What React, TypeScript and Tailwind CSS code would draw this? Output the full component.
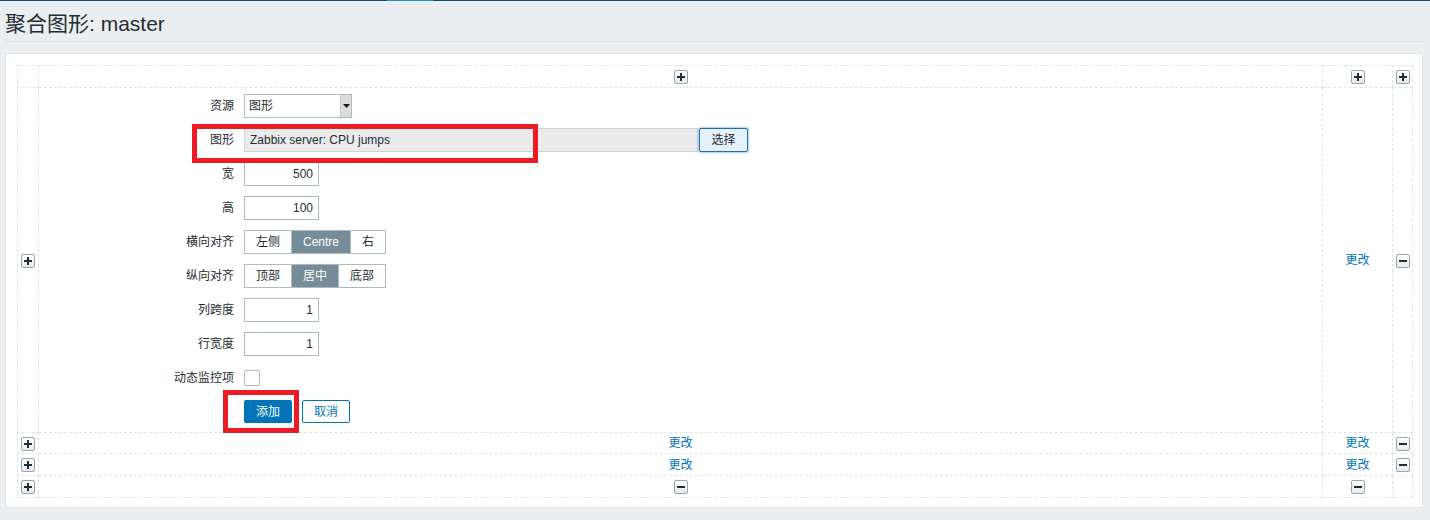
import React from 'react';

const BLUE = 'text-[#0275b8]';

const SmallBtn: React.FC<{ kind: 'plus' | 'minus' }> = ({ kind }) => (
    <span className="inline-flex w-[14px] h-[14px] items-center justify-center rounded-[2px] border border-[#98a6ae] bg-gradient-to-b from-white to-[#e6eaec] align-middle">
        <svg width="8" height="8" viewBox="0 0 8 8">
            <rect x="0" y="3" width="8" height="2" fill="#1f2c33" />
            {kind === 'plus' && <rect x="3" y="0" width="2" height="8" fill="#1f2c33" />}
        </svg>
    </span>
);

const Field: React.FC<{ label: string; children: React.ReactNode }> = ({ label, children }) => (
    <div className="flex items-center h-[24px]">
        <div className="w-[205px] pr-[10px] text-right shrink-0">{label}</div>
        {children}
    </div>
);

const NumInput: React.FC<{ value: string }> = ({ value }) => (
    <div className="w-[75px] h-[24px] border border-[#acbbc2] bg-white text-right pr-[5px] leading-[22px]">{value}</div>
);

const Segmented: React.FC<{ items: string[]; active: number }> = ({ items, active }) => (
    <div className="flex h-[24px] border border-[#acbbc2]">
        {items.map((it, i) => (
            <div
                key={it}
                className={`px-[11px] leading-[22px] ${i > 0 ? 'border-l border-[#acbbc2]' : ''} ${i === active ? 'bg-[#768d99] text-white' : 'bg-white'}`}
            >
                {it}
            </div>
        ))}
    </div>
);

const cell = 'border border-dashed border-[#dfe4e8] p-0';

export default function App() {
    return (
        <div className="relative w-[1430px] h-[520px] overflow-hidden bg-[#ebeef0] text-[12px] text-[#1f2c33] font-['Liberation_Sans','Noto_Sans_CJK_SC',sans-serif]">
            {/* top strip */}
            <div className="flex h-px bg-[#0b4a6e]">
                <div className="ml-[387px] w-[47px] bg-[#1f8fd0]" />
            </div>

            {/* header */}
            <div className="mx-[5px] h-[41px] border-b border-[#dde2e6] flex items-center">
                <h1 className="text-[21px] leading-none mt-[4px]">聚合图形: master</h1>
            </div>

            {/* panel */}
            <div className="ml-[5px] mt-[11px] w-[1418px] bg-white border border-[#dfe4e7] pl-[11px] pt-[11px] pb-[9px]">
                <table className="border-collapse table-fixed w-[1395px]">
                    <colgroup>
                        <col className="w-[21px]" />
                        <col className="w-[1284px]" />
                        <col className="w-[70px]" />
                        <col className="w-[20px]" />
                    </colgroup>
                    <tbody>
                        <tr className="h-[22px]">
                            <td className={cell}></td>
                            <td className={`${cell} text-center`}><SmallBtn kind="plus" /></td>
                            <td className={`${cell} text-center`}><SmallBtn kind="plus" /></td>
                            <td className={`${cell} text-center`}><SmallBtn kind="plus" /></td>
                        </tr>
                        <tr className="h-[345px]">
                            <td className={`${cell} text-center`}><SmallBtn kind="plus" /></td>
                            <td className={`${cell} align-top`}>
                                <div className="flex flex-col gap-[10px] pt-[6px] pb-[8px]">
                                    <Field label="资源">
                                        <div className="flex w-[108px] h-[24px] border border-[#acbbc2] bg-white">
                                            <div className="flex-1 pl-[4px] leading-[22px]">图形</div>
                                            <div className="w-[11px] bg-[#dcdcdc] border-l border-[#c6c6c6] flex items-center justify-center">
                                                <svg width="7" height="4" viewBox="0 0 7 4"><path d="M0 0h7L3.5 4z" fill="#111" /></svg>
                                            </div>
                                        </div>
                                    </Field>
                                    <Field label="图形">
                                        <div className="w-[454px] h-[24px] border border-[#cdd3d6] bg-[#ebebeb] pl-[5px] leading-[22px]">Zabbix server: CPU jumps</div>
                                        <button className="ml-px w-[49px] h-[24px] rounded-[2px] border border-[#1e6fb0] bg-[#e6f2fb] shadow-[0_0_2px_1px_rgba(2,117,184,0.35)] text-[#1f2c33]">选择</button>
                                    </Field>
                                    <Field label="宽"><NumInput value="500" /></Field>
                                    <Field label="高"><NumInput value="100" /></Field>
                                    <Field label="横向对齐"><Segmented items={['左侧', 'Centre', '右']} active={1} /></Field>
                                    <Field label="纵向对齐"><Segmented items={['顶部', '居中', '底部']} active={1} /></Field>
                                    <Field label="列跨度"><NumInput value="1" /></Field>
                                    <Field label="行宽度"><NumInput value="1" /></Field>
                                    <Field label="动态监控项">
                                        <div className="w-[16px] h-[16px] rounded-[2px] border border-[#acbbc2] bg-white" />
                                    </Field>
                                    <div className="flex h-[24px] pl-[205px] gap-[10px]">
                                        <button className="w-[48px] h-[23px] rounded-[2px] bg-[#0275b8] text-white">添加</button>
                                        <button className={`w-[48px] h-[23px] rounded-[2px] border border-[#0275b8] bg-white ${BLUE}`}>取消</button>
                                    </div>
                                </div>
                            </td>
                            <td className={`${cell} text-center ${BLUE}`}>更改</td>
                            <td className={`${cell} text-center`}><SmallBtn kind="minus" /></td>
                        </tr>
                        {[0, 1].map(i => (
                            <tr key={i} className={i === 0 ? 'h-[21px]' : 'h-[22px]'}>
                                <td className={`${cell} text-center`}><SmallBtn kind="plus" /></td>
                                <td className={`${cell} text-center ${BLUE}`}>更改</td>
                                <td className={`${cell} text-center ${BLUE}`}>更改</td>
                                <td className={`${cell} text-center`}><SmallBtn kind="minus" /></td>
                            </tr>
                        ))}
                        <tr className="h-[22px]">
                            <td className={`${cell} text-center`}><SmallBtn kind="plus" /></td>
                            <td className={`${cell} text-center`}><SmallBtn kind="minus" /></td>
                            <td className={`${cell} text-center`}><SmallBtn kind="minus" /></td>
                            <td className={cell}></td>
                        </tr>
                    </tbody>
                </table>
            </div>

            {/* red annotation boxes */}
            <div className="absolute left-[192px] top-[124px] w-[346px] h-[39px] border-[5px] border-[#ec1c24]" />
            <div className="absolute left-[223px] top-[390px] w-[76px] h-[43px] border-[5px] border-[#ec1c24]" />
        </div>
    );
}
